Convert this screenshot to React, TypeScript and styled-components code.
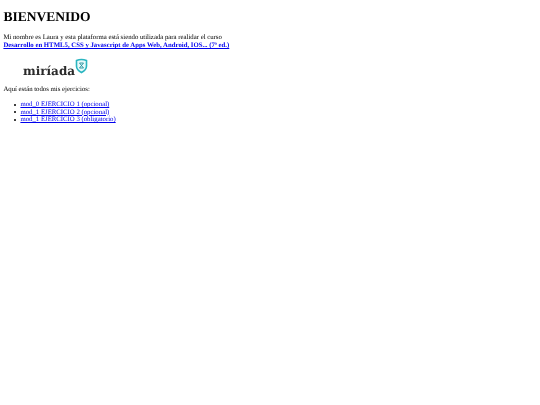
import React from "react";
import styled, { createGlobalStyle } from "styled-components";

const Global = createGlobalStyle`
  html, body { margin: 0; padding: 0; background: #fff; }
  body {
    font-family: "Liberation Serif", "Times New Roman", serif;
    font-size: 6.77px;
    color: #000;
    text-rendering: geometricPrecision;
  }
`;
const Page = styled.main`
  padding: 3.4px;
  filter: blur(0.25px);
`;
const Title = styled.h1`
  font-size: 13.54px;
  font-weight: bold;
  margin: 5.4px 0 9.9px;
  line-height: 15.6px;
`;
const Paragraph = styled.p`
  margin: 0 0 6.7px;
  line-height: 7.7px;
`;
const CourseLink = styled.a`
  color: #0000ee;
  font-weight: bold;
  text-decoration: underline;
`;
const LogoRow = styled.div`
  display: flex;
  align-items: flex-start;
  height: 24px;
  padding: 3px 0 0 19.6px;
  margin-bottom: 3px;
`;
const LogoWord = styled.span`
  font-family: "DejaVu Serif", serif;
  font-weight: bold;
  font-size: 12px;
  line-height: 14px;
  margin-top: 5px;
  color: #2a2a2a;
`;
const LogoMark = styled.svg`
  width: 13px;
  height: 16px;
  margin: -1px 0 0 0;
`;
const List = styled.ul`
  margin: 7px 0;
  padding: 0 0 0 17px;
  line-height: 7.6px;
  list-style: none;
`;
const Item = styled.li`
  position: relative;
  &::before {
    content: "";
    position: absolute;
    left: -6.5px;
    top: 2.6px;
    width: 2.2px;
    height: 2.2px;
    border-radius: 50%;
    background: #000;
  }
`;
const ItemLink = styled.a`
  color: #0000ee;
  text-decoration: underline;
`;

const items = ["mod_0 EJERCICIO 1 (opcional)", "mod_1 EJERCICIO 2 (opcional)", "mod_1 EJERCICIO 3 (obligatorio)"];

export default function App() {
  return (
    <Page>
      <Global />
      <Title>BIENVENIDO</Title>
      <Paragraph>
        Mi nombre es Laura y esta plataforma está siendo utilizada para realidar el curso
        <br />
        <CourseLink href="#">Desarrollo en HTML5, CSS y Javascript de Apps Web, Android, IOS... (7ª ed.)</CourseLink>
      </Paragraph>
      <LogoRow>
        <LogoWord>miríada</LogoWord>
        <LogoMark viewBox="0 0 13 16">
          <path d="M1.5 2.5 Q6.5 0.5 11.5 2.5 V8 Q11.5 12 6.5 14.5 Q1.5 12 1.5 8 Z" fill="#e8fafa" stroke="#2bb5c0" strokeWidth="1.6" />
          <path d="M4.5 5 H8.5 L4.5 10 H8.5 M4.5 5 L8.5 10" fill="none" stroke="#1f8f9c" strokeWidth="0.9" />
        </LogoMark>
      </LogoRow>
      <Paragraph>Aquí están todos mis ejercicios:</Paragraph>
      <List>
        {items.map((t) => (
          <Item key={t}>
            <ItemLink href="#">{t}</ItemLink>
          </Item>
        ))}
      </List>
    </Page>
  );
}
